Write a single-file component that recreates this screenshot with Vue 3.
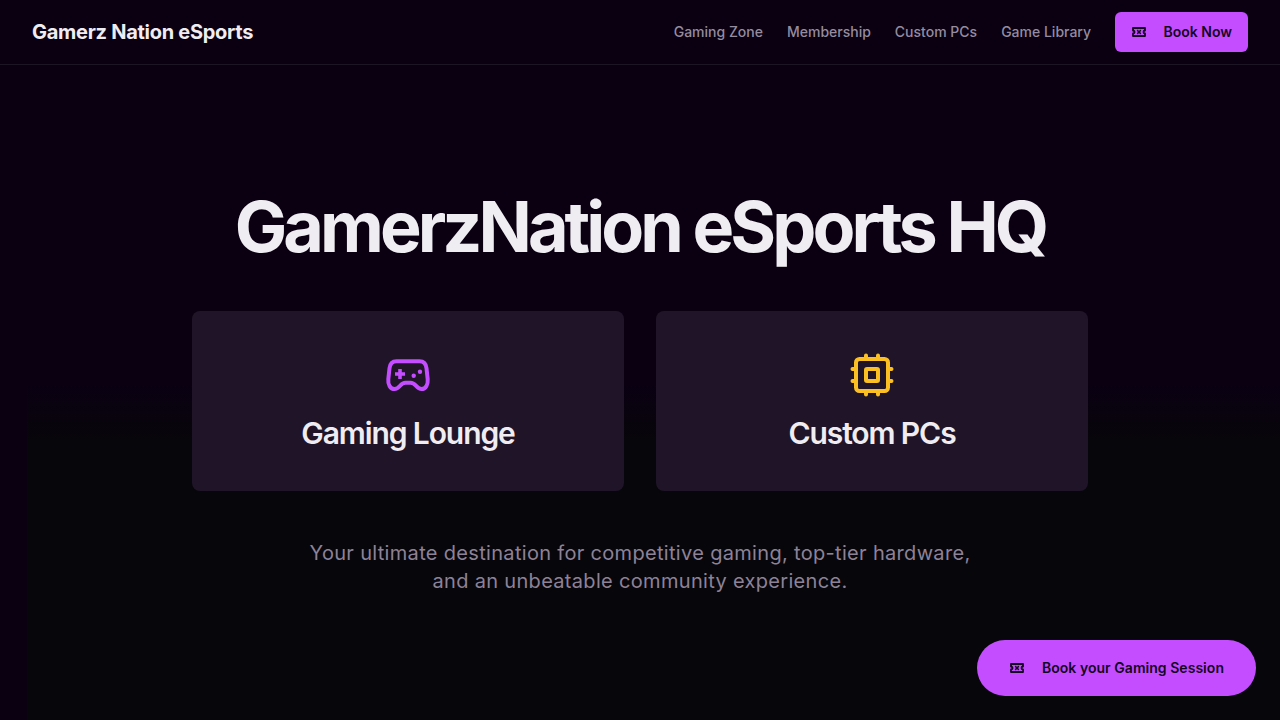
<template>
  <div class="page">
    <header class="topbar">
      <div class="logo">Gamerz Nation eSports</div>
      <nav class="nav">
        <a class="nav-link" v-for="link in links" :key="link">{{ link }}</a>
        <button class="book-btn">
          <svg class="ticket" viewBox="0 0 16 16" fill="none" stroke="currentColor" stroke-width="1.8" stroke-linejoin="round">
            <path d="M2 4h12v2.500a1.500 1.500 0 0 0 0 3V12H2V9.500a1.500 1.500 0 0 0 0-3z" />
            <path stroke-width="1.4" d="M6.300 6L7.700 8L6.300 10M9.700 6L8.300 8L9.700 10" />
          </svg>
          <span>Book Now</span>
        </button>
      </nav>
    </header>

    <main class="hero">
      <h1 class="title">GamerzNation eSports HQ</h1>
      <div class="cards">
        <div class="card">
          <svg class="card-icon purple" viewBox="0 0 48 48" fill="none" stroke="currentColor" stroke-width="4" stroke-linecap="round" stroke-linejoin="round">
            <path d="M12.500 10.300h23c4 0 6.500 2.500 7 7l1.200 11c.5 5.200-1.900 9.700-6.200 9.700-2.400 0-3.800-1.300-5.600-3.300-1.500-1.700-2.800-3-5.300-3h-5.200c-2.500 0-3.800 1.300-5.300 3-1.800 2-3.200 3.300-5.600 3.300-4.300 0-6.700-4.500-6.200-9.700l1.200-11c.5-4.500 3-7 7-7z" />
            <path stroke-width="3.600" stroke-linecap="butt" d="M16 18v10M11 23h10" />
            <circle cx="29.700" cy="24.700" r="2.200" fill="currentColor" stroke="none" />
            <circle cx="36" cy="20.700" r="2.200" fill="currentColor" stroke="none" />
          </svg>
          <h2 class="card-title">Gaming Lounge</h2>
        </div>
        <div class="card">
          <svg class="card-icon yellow" viewBox="0 0 48 48" fill="none" stroke="currentColor" stroke-width="4" stroke-linejoin="round">
            <rect x="8" y="8" width="32" height="32" rx="3.500" />
            <rect x="18" y="18" width="12" height="12" rx="1" />
            <path stroke-linecap="round" d="M18 4.500v2M30 4.500v2M18 41.500v2M30 41.500v2M4.500 18h2M4.500 30h2M41.500 18h2M41.500 30h2" />
          </svg>
          <h2 class="card-title">Custom PCs</h2>
        </div>
      </div>
      <p class="tagline">
        Your ultimate destination for competitive gaming, top-tier hardware,<br />
        and an unbeatable community experience.
      </p>
    </main>

    <button class="float-btn">
      <svg class="ticket" viewBox="0 0 16 16" fill="none" stroke="currentColor" stroke-width="1.8" stroke-linejoin="round">
        <path d="M2 4h12v2.500a1.500 1.500 0 0 0 0 3V12H2V9.500a1.500 1.500 0 0 0 0-3z" />
        <path stroke-width="1.4" d="M6.300 6L7.700 8L6.300 10M9.700 6L8.300 8L9.700 10" />
      </svg>
      <span>Book your Gaming Session</span>
    </button>
  </div>
</template>

<script setup>
const links = ['Gaming Zone', 'Membership', 'Custom PCs', 'Game Library']
</script>

<style>
html,
body {
  margin: 0;
  background: #0a0012;
}
</style>

<style scoped>
.page {
  position: relative;
  height: 720px;
  overflow: hidden;
  display: flex;
  flex-direction: column;
  color: #f0edf2;
  font-family: Inter, sans-serif;
  background:
    linear-gradient(#0a0012, #0a0012) 0 0 / 27px 100% no-repeat,
    linear-gradient(#0a0012 0, #0a0012 385px, #07060a 440px, #07060a 100%);
}

.topbar {
  height: 64px;
  flex: none;
  display: flex;
  align-items: center;
  justify-content: space-between;
  padding: 0 32px;
  border-bottom: 1px solid #1c1524;
}

.logo {
  font-size: 20px;
  font-weight: 700;
  letter-spacing: -0.28px;
}

.nav {
  display: flex;
  align-items: center;
  gap: 24px;
}

.nav-link {
  font-size: 14px;
  line-height: 20px;
  font-weight: 500;
  color: #958c9f;
}

.book-btn,
.float-btn {
  border: none;
  display: flex;
  align-items: center;
  gap: 17px;
  background: #c44dff;
  color: #14041f;
  font-family: Inter, sans-serif;
  font-size: 14px;
  line-height: 20px;
  font-weight: 600;
}

.book-btn {
  height: 40px;
  margin-left: -0.5px;
  padding: 0 16px;
  border-radius: 6px;
}

.ticket {
  width: 16px;
  height: 16px;
  flex: none;
}

.hero {
  flex: 1;
  display: flex;
  flex-direction: column;
  align-items: center;
  justify-content: center;
}

.title {
  margin: 0 0 48px;
  font-size: 70px;
  line-height: 72px;
  font-weight: 700;
  letter-spacing: -3.94px;
  white-space: nowrap;
}

.cards {
  width: 896px;
  display: grid;
  grid-template-columns: 1fr 1fr;
  gap: 32px;
}

.card {
  height: 180px;
  box-sizing: border-box;
  padding-top: 40px;
  display: flex;
  flex-direction: column;
  align-items: center;
  background: #201428;
  border-radius: 8px;
}

.card-icon {
  width: 48px;
  height: 48px;
}

.purple {
  color: #c44dff;
}

.yellow {
  color: #fbbf24;
}

.card-title {
  margin: 16px 0 0;
  font-size: 30px;
  line-height: 36px;
  font-weight: 600;
  letter-spacing: -1.1px;
}

.tagline {
  margin: 48px 0 0;
  font-size: 20px;
  line-height: 28px;
  text-align: center;
  color: #8d8298;
  letter-spacing: 0.32px;
}

.float-btn {
  position: absolute;
  right: 24px;
  bottom: 24px;
  height: 56px;
  padding: 0 32px;
  border-radius: 28px;
  letter-spacing: 0.04px;
}
</style>
